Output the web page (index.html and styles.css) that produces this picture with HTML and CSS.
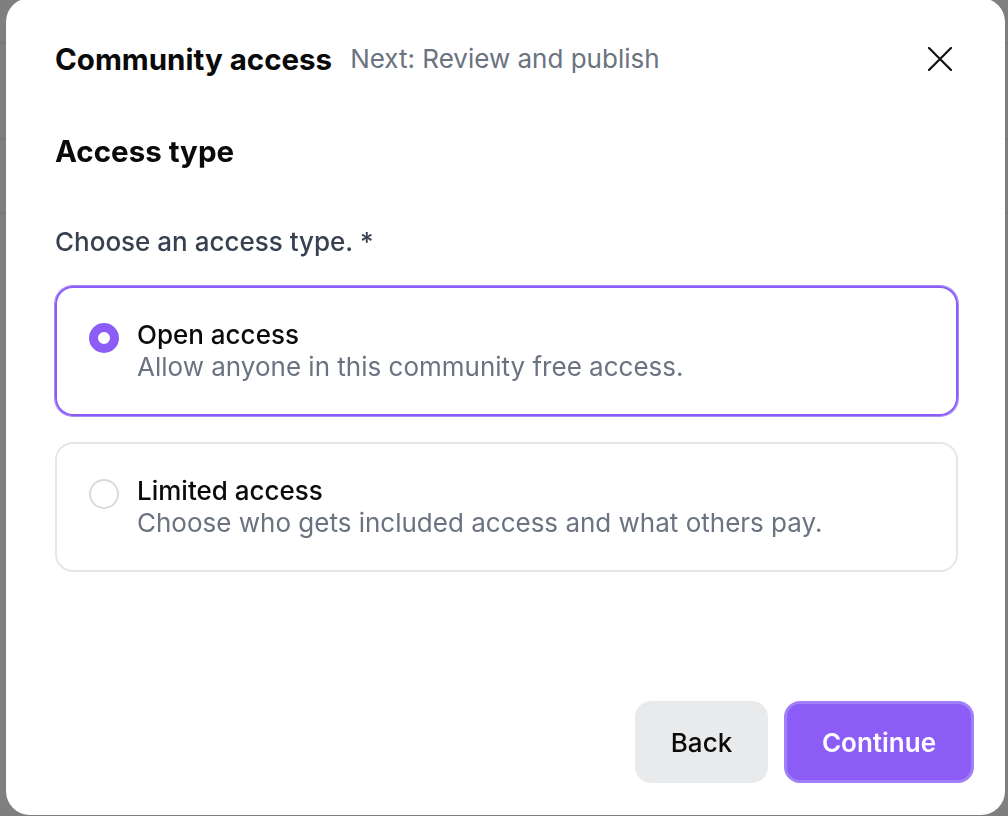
FILE: index.html
```html
<!DOCTYPE html>
<html lang="en">
<head>
    <meta charset="UTF-8">
    <meta name="viewport" content="width=device-width, initial-scale=1.0">
    <title>Community access</title>
    <link rel="stylesheet" href="styles.css">
</head>
<body>

    <!-- Page behind the dialog -->
    <div class="page">
        <div class="page__row page__row--top"></div>
        <div class="page__row page__row--mid"></div>
        <div class="page__row page__row--low"></div>
    </div>

    <!-- Dialog -->
    <div class="overlay">
        <div class="modal" role="dialog" aria-labelledby="modalTitle">
            <header class="modal__header">
                <h1 id="modalTitle" class="modal__title">Community access</h1>
                <span class="modal__next">Next: Review and publish</span>
                <button class="modal__close" aria-label="Close">
                    <svg width="24" height="24" viewBox="0 0 24 24" fill="none" stroke="#111" stroke-width="2.2" stroke-linecap="round">
                        <path d="M1 1L23 23M23 1L1 23"/>
                    </svg>
                </button>
            </header>

            <main class="modal__body">
                <h2 class="section-title">Access type</h2>
                <p class="field-label">Choose an access type. *</p>

                <div class="options">
                    <label class="option option--selected">
                        <span class="radio radio--checked"></span>
                        <span class="option__text">
                            <span class="option__title">Open access</span>
                            <span class="option__desc">Allow anyone in this community free access.</span>
                        </span>
                    </label>
                    <label class="option">
                        <span class="radio"></span>
                        <span class="option__text">
                            <span class="option__title">Limited access</span>
                            <span class="option__desc">Choose who gets included access and what others pay.</span>
                        </span>
                    </label>
                </div>
            </main>

            <footer class="modal__footer">
                <button class="btn btn--secondary">Back</button>
                <button class="btn btn--primary">Continue</button>
            </footer>
        </div>
    </div>

</body>
</html>
```

FILE: styles.css
```css
* {
    box-sizing: border-box;
}

body {
    margin: 0;
    padding: 0;
    background-color: #ffffff;
    font-family: Inter, 'Noto Sans', sans-serif;
    color: #0a0a0a;
    overflow: hidden;
}

/* Page behind */
.page {
    height: 816px;
}

.page__row {
    border-bottom: 2px solid #f0f0f0;
}

.page__row--top {
    height: 44px;
}

.page__row--mid {
    height: 96px;
}

.page__row--low {
    height: 74px;
}

/* Overlay */
.overlay {
    position: fixed;
    inset: 0;
    background-color: rgba(0, 0, 0, 0.5);
    display: flex;
}

.modal {
    margin: -2px 3px 1px 6px;
    flex: 1;
    background-color: #ffffff;
    border-radius: 24px;
    display: flex;
    flex-direction: column;
    padding: 43px 47px 0 49px;
}

/* Header */
.modal__header {
    display: flex;
    align-items: center;
    height: 36px;
}

.modal__title {
    margin: 0;
    font-size: 29.5px;
    font-weight: 700;
    line-height: 36px;
}

.modal__next {
    margin-left: 18px;
    font-size: 26px;
    color: #6b7280;
    line-height: 36px;
}

.modal__close {
    margin-left: auto;
    margin-right: 6px;
    padding: 0;
    border: none;
    background: none;
    width: 24px;
    height: 24px;
    cursor: pointer;
}

.modal__close svg {
    display: block;
}

/* Body */
.section-title {
    margin: 56px 0 0;
    font-size: 29.5px;
    font-weight: 700;
    line-height: 36px;
}

.field-label {
    margin: 57px 0 0;
    font-size: 26px;
    font-weight: 500;
    color: #374151;
    line-height: 32px;
}

.options {
    margin-top: 28px;
    display: flex;
    flex-direction: column;
    gap: 26px;
}

.option {
    display: flex;
    align-items: flex-start;
    gap: 18px;
    padding: 31px 32px 31px 32px;
    border: 2px solid #e5e7eb;
    border-radius: 18px;
    cursor: pointer;
}

.option--selected {
    border-color: #8b5cf6;
    box-shadow: 0 0 0 1px #a78bfa;
}

.option__text {
    display: flex;
    flex-direction: column;
}

.option__title {
    font-size: 26px;
    font-weight: 500;
    line-height: 32px;
}

.option__desc {
    font-size: 26px;
    color: #6b7280;
    line-height: 32px;
}

.radio {
    flex: none;
    margin-top: 4px;
    width: 30px;
    height: 30px;
    border-radius: 50%;
    border: 2px solid #d9dadd;
    background-color: #ffffff;
}

.radio--checked {
    border: 9px solid #8b5cf6;
}

/* Footer */
.modal__footer {
    margin-top: auto;
    margin-right: -16px;
    padding-bottom: 32px;
    display: flex;
    justify-content: flex-end;
    gap: 16px;
}

.btn {
    height: 82px;
    border-radius: 16px;
    font-family: inherit;
    font-size: 26px;
    cursor: pointer;
}

.btn--secondary {
    width: 133px;
    border: none;
    background-color: #e9eaec;
    color: #0a0a0a;
    font-weight: 500;
}

.btn--primary {
    width: 190px;
    border: 3px solid #a07ff8;
    background-color: #8b5cf6;
    color: #ffffff;
    font-weight: 600;
}
```
